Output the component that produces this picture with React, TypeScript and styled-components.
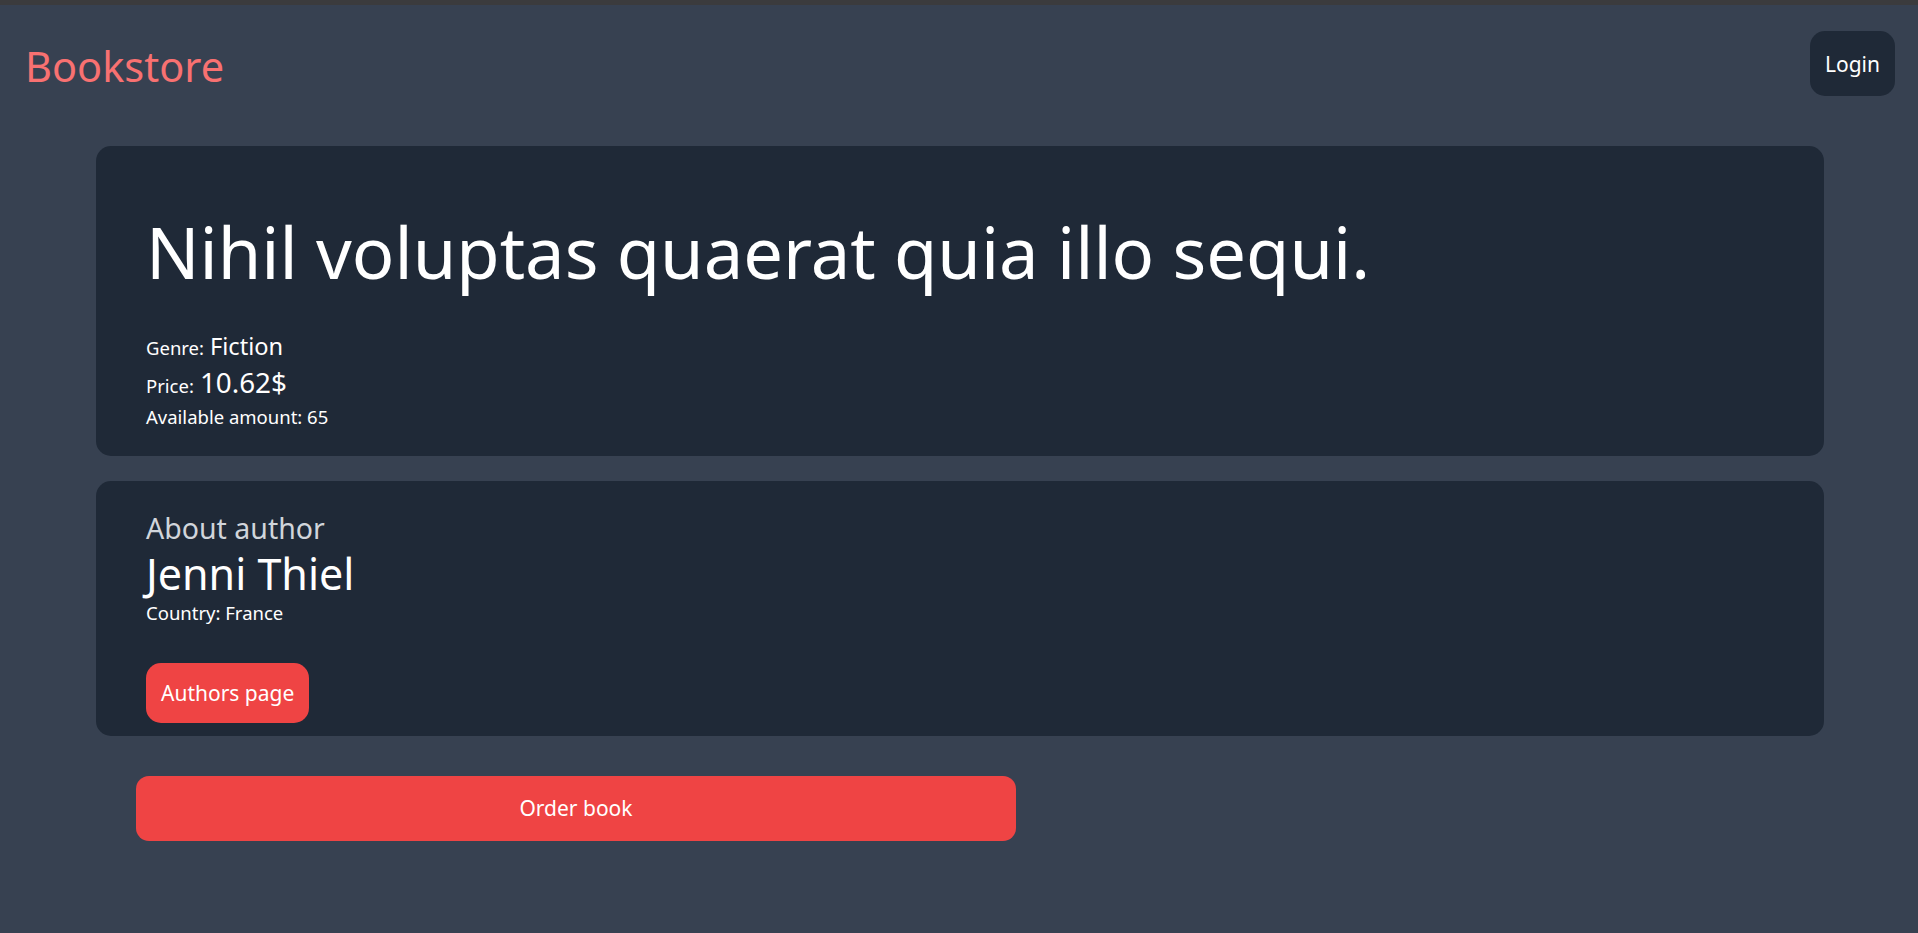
import React from "react";
import styled, { createGlobalStyle } from "styled-components";

const GlobalStyle = createGlobalStyle`
  html, body {
    margin: 0;
    padding: 0;
    background: #374151;
    min-height: 100%;
  }
  body {
    font-family: "Noto Sans", "Open Sans", sans-serif;
    color: #ffffff;
  }
  * { box-sizing: border-box; }
`;

const Page = styled.div`
  min-height: 933px;
  background: #374151;
  display: flex;
  flex-direction: column;
`;

const TopStrip = styled.div`
  height: 5px;
  background: #3b3b3d;
`;

const Header = styled.header`
  display: flex;
  justify-content: space-between;
  align-items: flex-start;
  padding: 26px 23px 0 23px;
`;

const Brand = styled.a`
  font-size: 41.5px;
  line-height: 1;
  color: #f87171;
  text-decoration: none;
  margin: 15px 0 0 2px;
`;

const DarkButton = styled.button`
  height: 65px;
  padding: 0 15px;
  border: none;
  border-radius: 15px;
  background: #1f2937;
  color: #ffffff;
  font-family: inherit;
  font-size: 21px;
  cursor: pointer;
`;

const Main = styled.main`
  display: flex;
  flex-direction: column;
  align-items: flex-start;
  padding: 50px 0 0 96px;
`;

const Card = styled.section<{ $pad: string }>`
  width: 1728px;
  background: #1f2937;
  border-radius: 15px;
  padding: ${(p) => p.$pad};
  display: flex;
  flex-direction: column;
  align-items: flex-start;
`;

const Title = styled.h1`
  margin: 0 0 42px 0;
  font-size: 70.5px;
  line-height: 75px;
  font-weight: 400;
  color: #ffffff;
`;

const InfoList = styled.div`
  display: flex;
  flex-direction: column;
  gap: 6px;
`;

const InfoRow = styled.div`
  display: flex;
  align-items: baseline;
  gap: 6px;
  color: #ffffff;
`;

const Label = styled.span`
  font-size: 18.5px;
  line-height: 1.2;
`;

const Value = styled.span<{ $size: number }>`
  font-size: ${(p) => p.$size}px;
  line-height: 1.2;
`;

const Subheading = styled.h3`
  margin: 0;
  font-size: 28.5px;
  line-height: 1.2;
  font-weight: 400;
  color: #d1d5db;
`;

const AuthorName = styled.h2`
  margin: 3px 0 0 0;
  font-size: 43px;
  line-height: 1.2;
  font-weight: 400;
  color: #ffffff;
`;

const Small = styled.p`
  margin: 2px 0 0 0;
  font-size: 18.5px;
  line-height: 1.2;
  color: #ffffff;
`;

const RedButton = styled.button<{ $width?: number; $height: number; $radius: number }>`
  height: ${(p) => p.$height}px;
  width: ${(p) => (p.$width ? `${p.$width}px` : "auto")};
  padding: 0 15px;
  border: none;
  border-radius: ${(p) => p.$radius}px;
  background: #ef4444;
  color: #ffffff;
  font-family: inherit;
  font-size: 21px;
  cursor: pointer;
`;

const AuthorsButton = styled(RedButton)`
  margin-top: 39px;
`;

const OrderButton = styled(RedButton)`
  margin: 40px 0 0 40px;
`;

const CardGap = styled.div`
  height: 25px;
`;

export default function App() {
  return (
    <>
      <GlobalStyle />
      <Page>
        <TopStrip />
        <Header>
          <Brand href="#">Bookstore</Brand>
          <DarkButton>Login</DarkButton>
        </Header>
        <Main>
          <Card $pad="69px 50px 28px 50px">
            <Title>Nihil voluptas quaerat quia illo sequi.</Title>
            <InfoList>
              <InfoRow>
                <Label>Genre:</Label>
                <Value $size={23.6}>Fiction</Value>
              </InfoRow>
              <InfoRow>
                <Label>Price:</Label>
                <Value $size={27.8}>10.62$</Value>
              </InfoRow>
              <InfoRow>
                <Label>Available amount: 65</Label>
              </InfoRow>
            </InfoList>
          </Card>
          <CardGap />
          <Card $pad="30px 50px 13px 50px">
            <Subheading>About author</Subheading>
            <AuthorName>Jenni Thiel</AuthorName>
            <Small>Country: France</Small>
            <AuthorsButton $height={60} $radius={15}>
              Authors page
            </AuthorsButton>
          </Card>
          <OrderButton $width={880} $height={65} $radius={13}>
            Order book
          </OrderButton>
        </Main>
      </Page>
    </>
  );
}
